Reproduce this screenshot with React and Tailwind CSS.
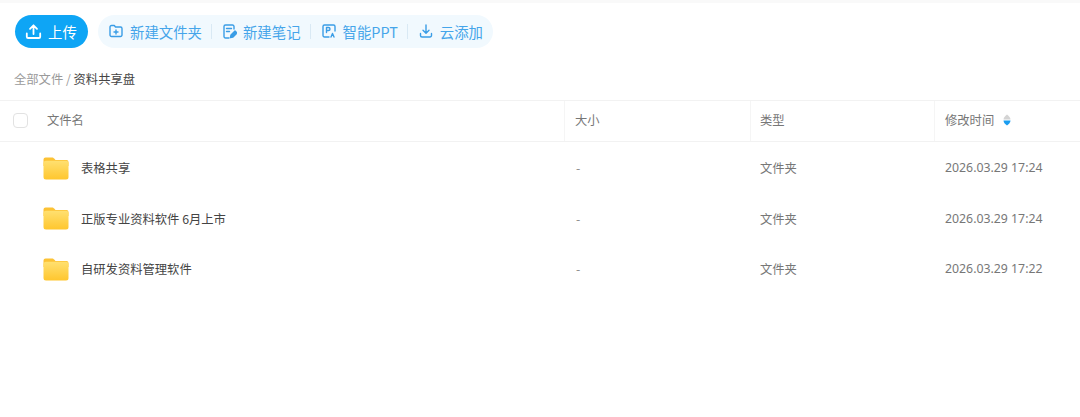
import React from "react";

const font = '"Noto Sans CJK SC", "Noto Sans", sans-serif';

const rows = [
  { name: "表格共享", time: "2026.03.29 17:24" },
  { name: "正版专业资料软件 6月上市", time: "2026.03.29 17:24" },
  { name: "自研发资料管理软件", time: "2026.03.29 17:22" },
];

const FolderIcon = ({ id }) => (
  <svg width="26" height="23" viewBox="0 0 26 23" className="block">
    <defs>
      <linearGradient id={id} x1="0" y1="0" x2="0" y2="1">
        <stop offset="0" stopColor="#ffe070" />
        <stop offset="1" stopColor="#ffc62e" />
      </linearGradient>
    </defs>
    <path d="M2.500 .5h6.500c1 0 1.600.4 2.200 1.100L12.500 3h11a2 2 0 0 1 2 2v4H.5V2.500a2 2 0 0 1 2-2z" fill="#fcc234" />
    <rect x="0.500" y="3.800" width="25" height="18.700" rx="2.500" fill={`url(#${id})`} />
  </svg>
);

const Divider = () => <span className="ml-[9px] mr-[11px] h-[15px] w-px bg-[#d9e9f4]" />;

const ToolButton = ({ icon, label, gap = "gap-[7px]" }) => (
  <div className={"flex items-center text-[14.400px] text-[#45a5ea] " + gap}>
    {icon}
    <span>{label}</span>
  </div>
);

const stroke = {
  fill: "none",
  stroke: "#3a9de6",
  strokeWidth: 1.400,
  strokeLinecap: "round",
  strokeLinejoin: "round",
};

const App = () => {
  return (
    <div className="h-[417px] w-[1080px] overflow-hidden bg-white" style={{ fontFamily: font }}>
      <div className="h-[3px] bg-[#f9f9f9]" />

      <div className="flex items-center pl-[15px] pt-[12px]">
        <div className="flex h-[33px] w-[73px] items-center gap-[6px] rounded-full bg-[#0ea5f5] pl-[10px] text-[14.400px] text-white">
          <svg width="17" height="17" viewBox="0 0 17 17" fill="none" stroke="#fff" strokeWidth="1.800" strokeLinecap="round" strokeLinejoin="round">
            <path d="M8.500 11V2.500M5 5.800l3.500-3.500L12 5.800M1.800 10.500v3.200a1.300 1.300 0 0 0 1.300 1.300h10.800a1.300 1.300 0 0 0 1.300-1.300v-3.200" />
          </svg>
          <span>上传</span>
        </div>

        <div className="ml-[10px] flex h-[33px] w-[395px] items-center rounded-full bg-[#f1f9fe] pl-[11px]">
          <ToolButton
            label="新建文件夹"
            icon={
              <svg width="14" height="14" viewBox="0 0 14 14" {...stroke}>
                <path d="M1 3a1.500 1.500 0 0 1 1.500-1.500h2.800l1.200 1.500h5a1.500 1.500 0 0 1 1.500 1.500v6.500a1.500 1.500 0 0 1-1.500 1.500h-9A1.500 1.500 0 0 1 1 11z" />
                <path d="M7 6v4M5 8h4" />
              </svg>
            }
          />
          <Divider />
          <ToolButton
            label="新建笔记"
            gap="gap-[6px]"
            icon={
              <svg width="14" height="15" viewBox="0 0 14 15" {...stroke}>
                <path d="M11 5V2.500A1.500 1.500 0 0 0 9.500 1h-7A1.500 1.500 0 0 0 1 2.500v10A1.500 1.500 0 0 0 2.500 14H6" />
                <path d="M3.500 4.500h5M3.500 7.500h3" />
                <path d="M7.500 13.500l.5-2.500 4-4 2 2-4 4z" fill="#3a9de6" />
              </svg>
            }
          />
          <Divider />
          <ToolButton
            label="智能PPT"
            icon={
              <svg width="14" height="14" viewBox="0 0 14 14" {...stroke}>
                <path d="M7 13H2.500A1.500 1.500 0 0 1 1 11.500v-9A1.500 1.500 0 0 1 2.500 1h9A1.500 1.500 0 0 1 13 2.500V7" />
                <path d="M4.500 8.500v-5h2a1.500 1.500 0 0 1 0 3h-2" />
                <path d="M9 13l1.500-3.500L12 13" />
              </svg>
            }
          />
          <Divider />
          <ToolButton
            label="云添加"
            icon={
              <svg width="14" height="14" viewBox="0 0 14 14" {...stroke}>
                <path d="M7 1v8M4 6.200L7 9.200l3-3M1.500 9.500v2a1.500 1.500 0 0 0 1.500 1.500h8a1.500 1.500 0 0 0 1.500-1.500v-2" />
              </svg>
            }
          />
        </div>
      </div>

      <div className="pl-[14px] pt-[22px] text-[12.300px] leading-[18px]">
        <span className="text-[#9a9a9a]">全部文件 / </span>
        <span className="text-[#444]">资料共享盘</span>
      </div>

      <div className="mt-[12px] grid h-[42px] grid-cols-[564px_186px_184px_146px] border-y border-[#f2f2f2] text-[12.300px] text-[#777]">
        <div className="flex items-center pb-[2px] pl-[13px]">
          <span className="h-[15px] w-[15px] rounded-[4px] border border-[#e2e2e2] bg-white" />
          <span className="ml-[19px]">文件名</span>
        </div>
        <div className="flex items-center border-l border-[#f5f5f5] pb-[2px] pl-[10px]">大小</div>
        <div className="flex items-center border-l border-[#f5f5f5] pb-[2px] pl-[9px]">类型</div>
        <div className="flex items-center border-l border-[#f5f5f5] pb-[2px] pl-[10px]">
          <span>修改时间</span>
          <svg width="8" height="12" viewBox="0 0 8 12" className="ml-[9px]">
            <path d="M4 .5C5.500 1.500 7.500 3.500 7.500 5.500H.5C.5 3.500 2.500 1.500 4 .5z" fill="#d4d4d4" />
            <path d="M4 11.500C2.500 10.500.5 8.500.5 6.500h7C7.500 8.500 5.500 10.500 4 11.500z" fill="#1a9df0" />
          </svg>
        </div>
      </div>

      <div className="pt-[1px]">
        {rows.map((row, i) => (
          <div key={row.name} className="grid h-[50.500px] grid-cols-[564px_186px_184px_146px] items-center text-[12.300px]">
            <div className="flex items-center pl-[43px]">
              <FolderIcon id={`folder-grad-${i}`} />
              <span className="ml-[12px] text-[#444]">{row.name}</span>
            </div>
            <div className="pl-[12px] text-[#888]">-</div>
            <div className="pl-[10px] text-[#777]">文件夹</div>
            <div className="pl-[11px] text-[#777]" style={{ fontFamily: '"Noto Sans", sans-serif' }}>{row.time}</div>
          </div>
        ))}
      </div>
    </div>
  );
};

export default App;
